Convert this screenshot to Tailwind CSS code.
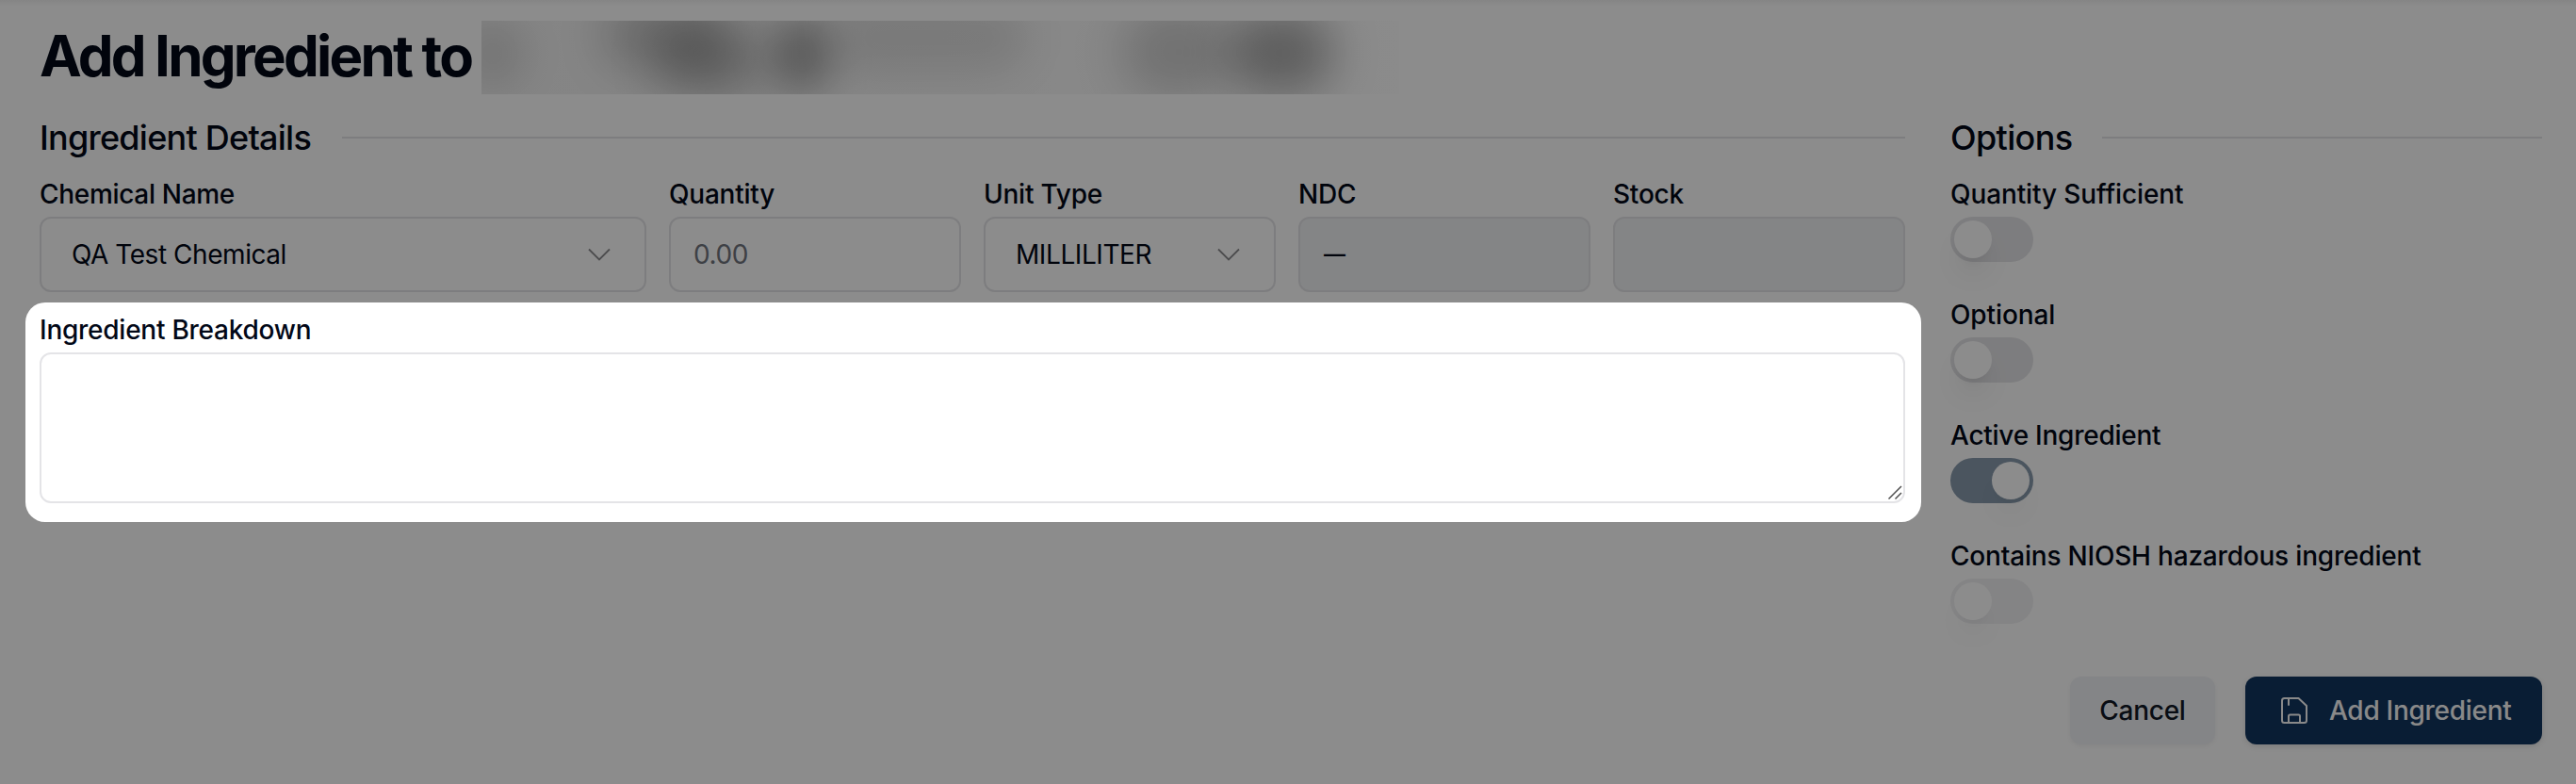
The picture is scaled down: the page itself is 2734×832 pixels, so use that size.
<!DOCTYPE html>
<html lang="en">
<head>
    <meta charset="UTF-8">
    <meta name="viewport" content="width=device-width, initial-scale=1.0">
    <title>Add Ingredient</title>
    <script src="https://cdn.jsdelivr.net/npm/@tailwindcss/browser@4"></script>
</head>
<body class="relative h-[832px] overflow-hidden bg-white font-['Inter','Liberation_Sans',sans-serif] text-[28px] leading-[28px] text-[#020817]">

    <div class="flex h-full flex-col bg-linear-to-b from-black/5 to-transparent to-[6px] pl-[42px] pr-9 pt-[22px]">
        <!-- Title -->
        <div class="flex h-[77px] items-center gap-[11px]">
            <h1 class="w-[458px] whitespace-nowrap pb-0.5 text-[60px] font-bold leading-[75px] tracking-[-0.0465em]">Add Ingredient to</h1>
            <div class="relative h-[78px] w-[974px] overflow-hidden bg-linear-to-r from-[#f1f1f1] via-[#f5f5f5] to-[#fdfdfd]">
                <div class="absolute -left-5 top-0 h-[70px] w-16 rounded-full bg-black/12 blur-[20px]"></div>
                <div class="absolute left-[130px] -top-5 h-[70px] w-[130px] rounded-full bg-black/20 blur-[24px]"></div>
                <div class="absolute left-[185px] top-1 h-[74px] w-[115px] rounded-full bg-black/24 blur-[24px]"></div>
                <div class="absolute left-[310px] -top-1 h-[80px] w-[60px] rounded-full bg-black/32 blur-[20px]"></div>
                <div class="absolute left-[370px] -top-5 h-[76px] w-[210px] rounded-full bg-black/9 blur-[20px]"></div>
                <div class="absolute left-[680px] -top-3 h-[90px] w-[120px] rounded-full bg-black/18 blur-[26px]"></div>
                <div class="absolute left-[795px] -top-2 h-[84px] w-[108px] rounded-full bg-black/32 blur-[24px]"></div>
            </div>
        </div>

        <div class="mt-[27px] flex gap-12">
            <!-- Ingredient details -->
            <div class="w-[1980px]">
                <div class="flex h-10 items-center">
                    <h2 class="w-[321px] whitespace-nowrap text-[36px] font-medium leading-10 tracking-[-0.021em]">Ingredient Details</h2>
                    <div class="h-0.5 flex-1 bg-[#e4e4e7]"></div>
                </div>
                <div class="mt-[26px] grid grid-cols-6 gap-6">
                    <div class="col-span-2">
                        <label class="block whitespace-nowrap font-medium tracking-[-0.011em]">Chemical Name</label>
                        <div class="mt-[10px] flex h-20 items-center justify-between rounded-xl border-2 border-[#e4e4e7] pl-8 pr-9">
                            <span class="tracking-[-0.016em]">QA Test Chemical</span>
                            <svg class="h-3.5 w-6" viewBox="0 0 24 14" fill="none" stroke="#8b8b8e" stroke-width="1.8"><path d="M1 1.5 12 12.5 23 1.5"/></svg>
                        </div>
                    </div>
                    <div>
                        <label class="block font-medium tracking-[-0.008em]">Quantity</label>
                        <div class="mt-[10px] flex h-20 items-center rounded-xl border-2 border-[#e4e4e7] pl-6 tracking-[-0.016em] text-[#71757f]">0.00</div>
                    </div>
                    <div>
                        <label class="block font-medium tracking-[-0.008em]">Unit Type</label>
                        <div class="mt-[10px] flex h-20 items-center justify-between rounded-xl border-2 border-[#e4e4e7] pl-8 pr-9">
                            <span class="tracking-[-0.015em]">MILLILITER</span>
                            <svg class="h-3.5 w-6" viewBox="0 0 24 14" fill="none" stroke="#8b8b8e" stroke-width="1.8"><path d="M1 1.5 12 12.5 23 1.5"/></svg>
                        </div>
                    </div>
                    <div>
                        <label class="block font-medium tracking-[-0.008em]">NDC</label>
                        <div class="mt-[10px] flex h-20 items-center rounded-xl border-2 border-[#e4e4e7] bg-[#f0f2f5] pl-[25px]">
                            <span class="text-[23px] font-medium">—</span>
                        </div>
                    </div>
                    <div>
                        <label class="block font-medium tracking-[-0.008em]">Stock</label>
                        <div class="mt-[10px] h-20 rounded-xl border-2 border-[#e4e4e7] bg-[#f0f2f5]"></div>
                    </div>
                </div>
                <div class="mt-[26px]">
                    <label class="block font-medium tracking-[-0.009em]">Ingredient Breakdown</label>
                    <div class="mt-[10px] flex h-40 items-end justify-end rounded-xl border-2 border-[#e4e4e7] pb-[1px] pr-[1px]">
                        <svg class="h-4 w-4" viewBox="0 0 16 16" fill="none" stroke="#505050" stroke-width="1.5"><path d="M1.500 14.500 15 1M8.500 14.500 15 8"/></svg>
                    </div>
                </div>
            </div>

            <!-- Options -->
            <div class="flex-1">
                <div class="flex h-10 items-center">
                    <h2 class="w-[161px] whitespace-nowrap text-[36px] font-medium leading-10 tracking-[-0.018em]">Options</h2>
                    <div class="h-0.5 flex-1 bg-[#e4e4e7]"></div>
                </div>
                <div class="mt-[26px] flex flex-col gap-[42px]">
                    <div>
                        <label class="block font-medium tracking-[-0.004em]">Quantity Sufficient</label>
                        <div class="mt-[10px] flex h-12 w-[88px] rounded-full bg-[#e4e4e7] p-1">
                            <div class="h-10 w-10 rounded-full bg-white shadow-[0_20px_30px_-6px_rgb(0_0_0/0.1),0_8px_12px_-8px_rgb(0_0_0/0.1)]"></div>
                        </div>
                    </div>
                    <div>
                        <label class="block font-medium tracking-[-0.004em]">Optional</label>
                        <div class="mt-[10px] flex h-12 w-[88px] rounded-full bg-[#e4e4e7] p-1">
                            <div class="h-10 w-10 rounded-full bg-white shadow-[0_20px_30px_-6px_rgb(0_0_0/0.1),0_8px_12px_-8px_rgb(0_0_0/0.1)]"></div>
                        </div>
                    </div>
                    <div>
                        <label class="block font-medium tracking-[-0.009em]">Active Ingredient</label>
                        <div class="mt-[10px] flex h-12 w-[88px] justify-end rounded-full bg-[#899bad] p-1">
                            <div class="h-10 w-10 rounded-full bg-white shadow-[0_20px_30px_-6px_rgb(0_0_0/0.05),0_8px_12px_-8px_rgb(0_0_0/0.05)]"></div>
                        </div>
                    </div>
                    <div>
                        <label class="block whitespace-nowrap font-medium tracking-[-0.007em]">Contains NIOSH hazardous ingredient</label>
                        <div class="mt-[10px] flex h-12 w-[88px] rounded-full bg-[#f1f1f3] p-1">
                            <div class="h-10 w-10 rounded-full bg-white shadow-[0_20px_30px_-6px_rgb(0_0_0/0.05),0_8px_12px_-8px_rgb(0_0_0/0.05)]"></div>
                        </div>
                    </div>
                </div>
            </div>
        </div>

        <!-- Actions -->
        <div class="mt-14 flex justify-end gap-8 font-medium tracking-[-0.01em]">
            <button class="h-[72px] w-[154px] rounded-xl bg-[#f1f3f6] text-[#121826] shadow-[0_2px_4px_rgb(0_0_0/0.05)]">Cancel</button>
            <button class="flex h-[72px] w-[315px] items-center whitespace-nowrap rounded-xl bg-[#12355f] pl-[37px] text-[#fafafa] shadow-[0_2px_6px_rgb(0_0_0/0.12)]">
                <svg class="mr-[22px] h-[30px] w-[30px]" viewBox="0 0 30 30" fill="none" stroke="currentColor" stroke-width="2" stroke-linejoin="round" stroke-linecap="round">
                    <path d="M4.500 2H19.500L28 10V25.500Q28 28 25.500 28H4.500Q2 28 2 25.500V4.500Q2 2 4.500 2Z"/>
                    <path d="M9 2.500V9M9 27.500V21Q9 19.500 10.500 19.500H19.500Q21 19.500 21 21V27.500"/>
                </svg>
                <span>Add Ingredient</span>
            </button>
        </div>
    </div>

    <!-- Spotlight over the breakdown field, dims everything else -->
    <div class="pointer-events-none absolute left-[27px] top-[321px] h-[233px] w-[2012px] rounded-[21px] shadow-[0_0_0_3000px_rgb(0_0_0/0.45)]"></div>
</body>
</html>
